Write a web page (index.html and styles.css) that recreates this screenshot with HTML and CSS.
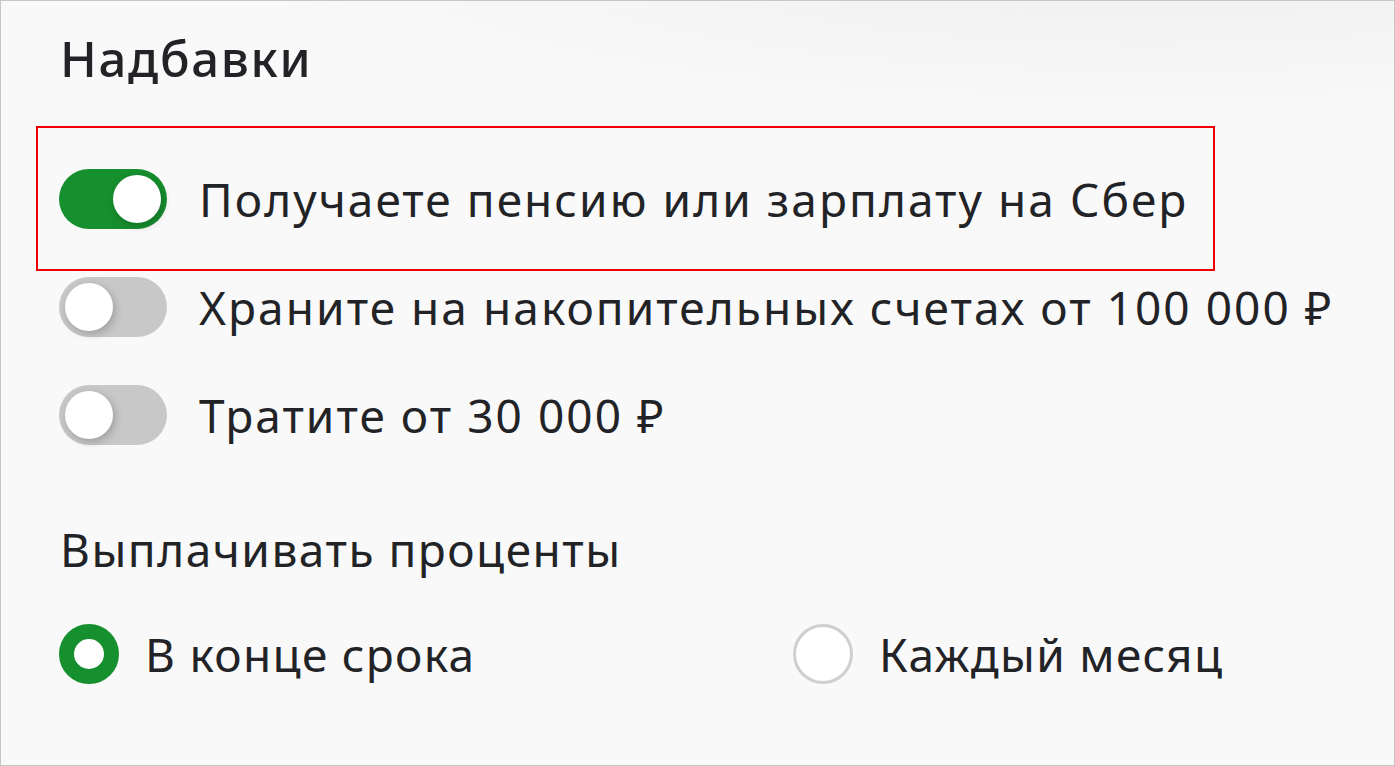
FILE: index.html
```html
<!DOCTYPE html>
<html lang="ru">
<head>
<meta charset="utf-8">
<link rel="stylesheet" href="styles.css">
</head>
<body>
<div class="page">
  <h2 class="title">Надбавки</h2>
  <div class="toggles">
    <div class="row row-marked">
      <span class="switch switch-on"><span class="knob"></span></span>
      <span class="label">Получаете пенсию или зарплату на Сбер</span>
    </div>
    <div class="row">
      <span class="switch"><span class="knob"></span></span>
      <span class="label">Храните на накопительных счетах от 100 000 ₽</span>
    </div>
    <div class="row">
      <span class="switch"><span class="knob"></span></span>
      <span class="label">Тратите от 30 000 ₽</span>
    </div>
  </div>
  <div class="subtitle">Выплачивать проценты</div>
  <div class="radios">
    <div class="radio-item">
      <span class="radio radio-on"></span>
      <span class="label label-radio">В конце срока</span>
    </div>
    <div class="radio-item">
      <span class="radio"></span>
      <span class="label label-radio">Каждый месяц</span>
    </div>
  </div>
</div>
</body>
</html>
```

FILE: styles.css
```css
* { box-sizing: border-box; }
html, body { margin: 0; padding: 0; }
body {
  width: 1395px;
  height: 766px;
  overflow: hidden;
  font-family: "Noto Sans", "Open Sans", sans-serif;
  color: #222326;
}
.page {
  width: 1395px;
  height: 766px;
  border: 1px solid #c6c6c6;
  background: radial-gradient(ellipse 900px 160px at 1150px -40px, #efefef 0%, #f9f9f9 100%);
  background-color: #f9f9f9;
  padding: 0 0 0 58px;
}
.title {
  margin: 0;
  padding-top: 22px;
  font-size: 49px;
  line-height: 70px;
  font-weight: 500;
  letter-spacing: 1.7px;
  padding-left: 1px;
}
.toggles {
  margin-top: 52px;
  display: flex;
  flex-direction: column;
}
.row {
  height: 108px;
  display: flex;
  align-items: center;
  gap: 32px;
  position: relative;
}
.row-marked::after {
  content: "";
  position: absolute;
  left: -23px;
  top: -19px;
  width: 1175px;
  height: 141px;
  border: 2px solid #f00000;
  pointer-events: none;
}
.label {
  font-size: 46px;
  line-height: 60px;
  letter-spacing: 2.05px;
  white-space: nowrap;
}
.switch {
  flex: none;
  width: 108px;
  height: 60px;
  border-radius: 30px;
  background: #c8c8c8;
  display: flex;
  align-items: center;
  padding: 0 6px;
}
.switch-on {
  background: #168f2e;
  justify-content: flex-end;
}
.knob {
  width: 48px;
  height: 48px;
  border-radius: 50%;
  background: #fff;
  box-shadow: 2px 3px 8px rgba(0, 0, 0, 0.22);
}
.subtitle {
  margin-top: 50px;
  font-size: 46px;
  line-height: 60px;
  letter-spacing: 1.5px;
  padding-left: 1px;
}
.radios {
  margin-top: 45px;
  display: grid;
  grid-template-columns: 734px auto;
}
.radio-item {
  display: flex;
  align-items: center;
  gap: 26px;
  height: 60px;
}
.label-radio {
  letter-spacing: 1.3px;
}
.radio {
  flex: none;
  width: 60px;
  height: 60px;
  border-radius: 50%;
  background: #fff;
  border: 3px solid #cfcfcf;
}
.radio-on {
  border: 15px solid #168f2e;
}
```
